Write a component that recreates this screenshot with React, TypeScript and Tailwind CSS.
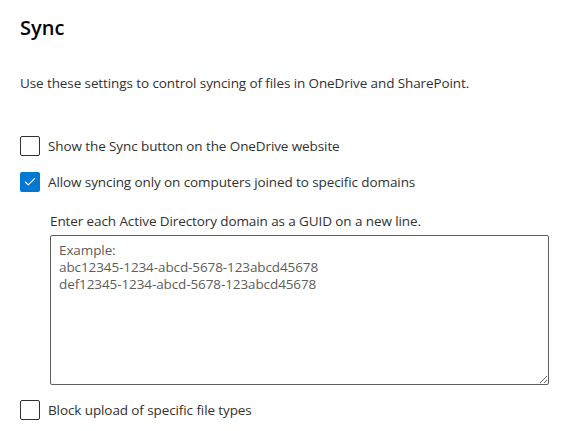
import { Check } from "lucide-react";

const Checkbox = ({ checked, label }: { checked?: boolean; label: string }) => (
  <label className="flex items-center gap-2 text-[13.5px] leading-5 tracking-[-0.1px] text-[#323130]">
    {checked ? (
      <span className="flex h-5 w-5 items-center justify-center rounded-[2px] bg-[#0078d4]">
        <Check className="h-3.5 w-3.5 text-white" strokeWidth={2} />
      </span>
    ) : (
      <span className="h-5 w-5 rounded-[2px] border border-[#323130] bg-white" />
    )}
    <span>{label}</span>
  </label>
);

export default function App() {
  return (
    <div
      className="h-[431px] w-[561px] bg-white pl-5 pr-3 pt-[14px] text-[#323130]"
      style={{ fontFamily: '"Open Sans", "Noto Sans", sans-serif' }}
    >
      <h1 className="text-[20px] font-semibold leading-7 text-[#000]">Sync</h1>
      <p className="mt-[31px] text-[13.5px] leading-5 tracking-[-0.1px]">
        Use these settings to control syncing of files in OneDrive and SharePoint.
      </p>
      <div className="mt-[43px] flex flex-col gap-4">
        <Checkbox label="Show the Sync button on the OneDrive website" />
        <Checkbox checked label="Allow syncing only on computers joined to specific domains" />
      </div>
      <div className="ml-[30px] mt-[19px]">
        <p className="text-[13.5px] leading-5 tracking-[-0.1px]">
          Enter each Active Directory domain as a GUID on a new line.
        </p>
        <textarea
          className="mt-[4px] block h-[150px] w-[499px] rounded-[2px] border border-[#605e5c] px-2 py-[6px] text-[13.5px] leading-[17px] tracking-[-0.1px] text-[#323130] placeholder:text-[#605e5c]"
          placeholder={
            "Example:\nabc12345-1234-abcd-5678-123abcd45678\ndef12345-1234-abcd-5678-123abcd45678"
          }
        />
      </div>
      <div className="mt-[15px]">
        <Checkbox label="Block upload of specific file types" />
      </div>
    </div>
  );
}
